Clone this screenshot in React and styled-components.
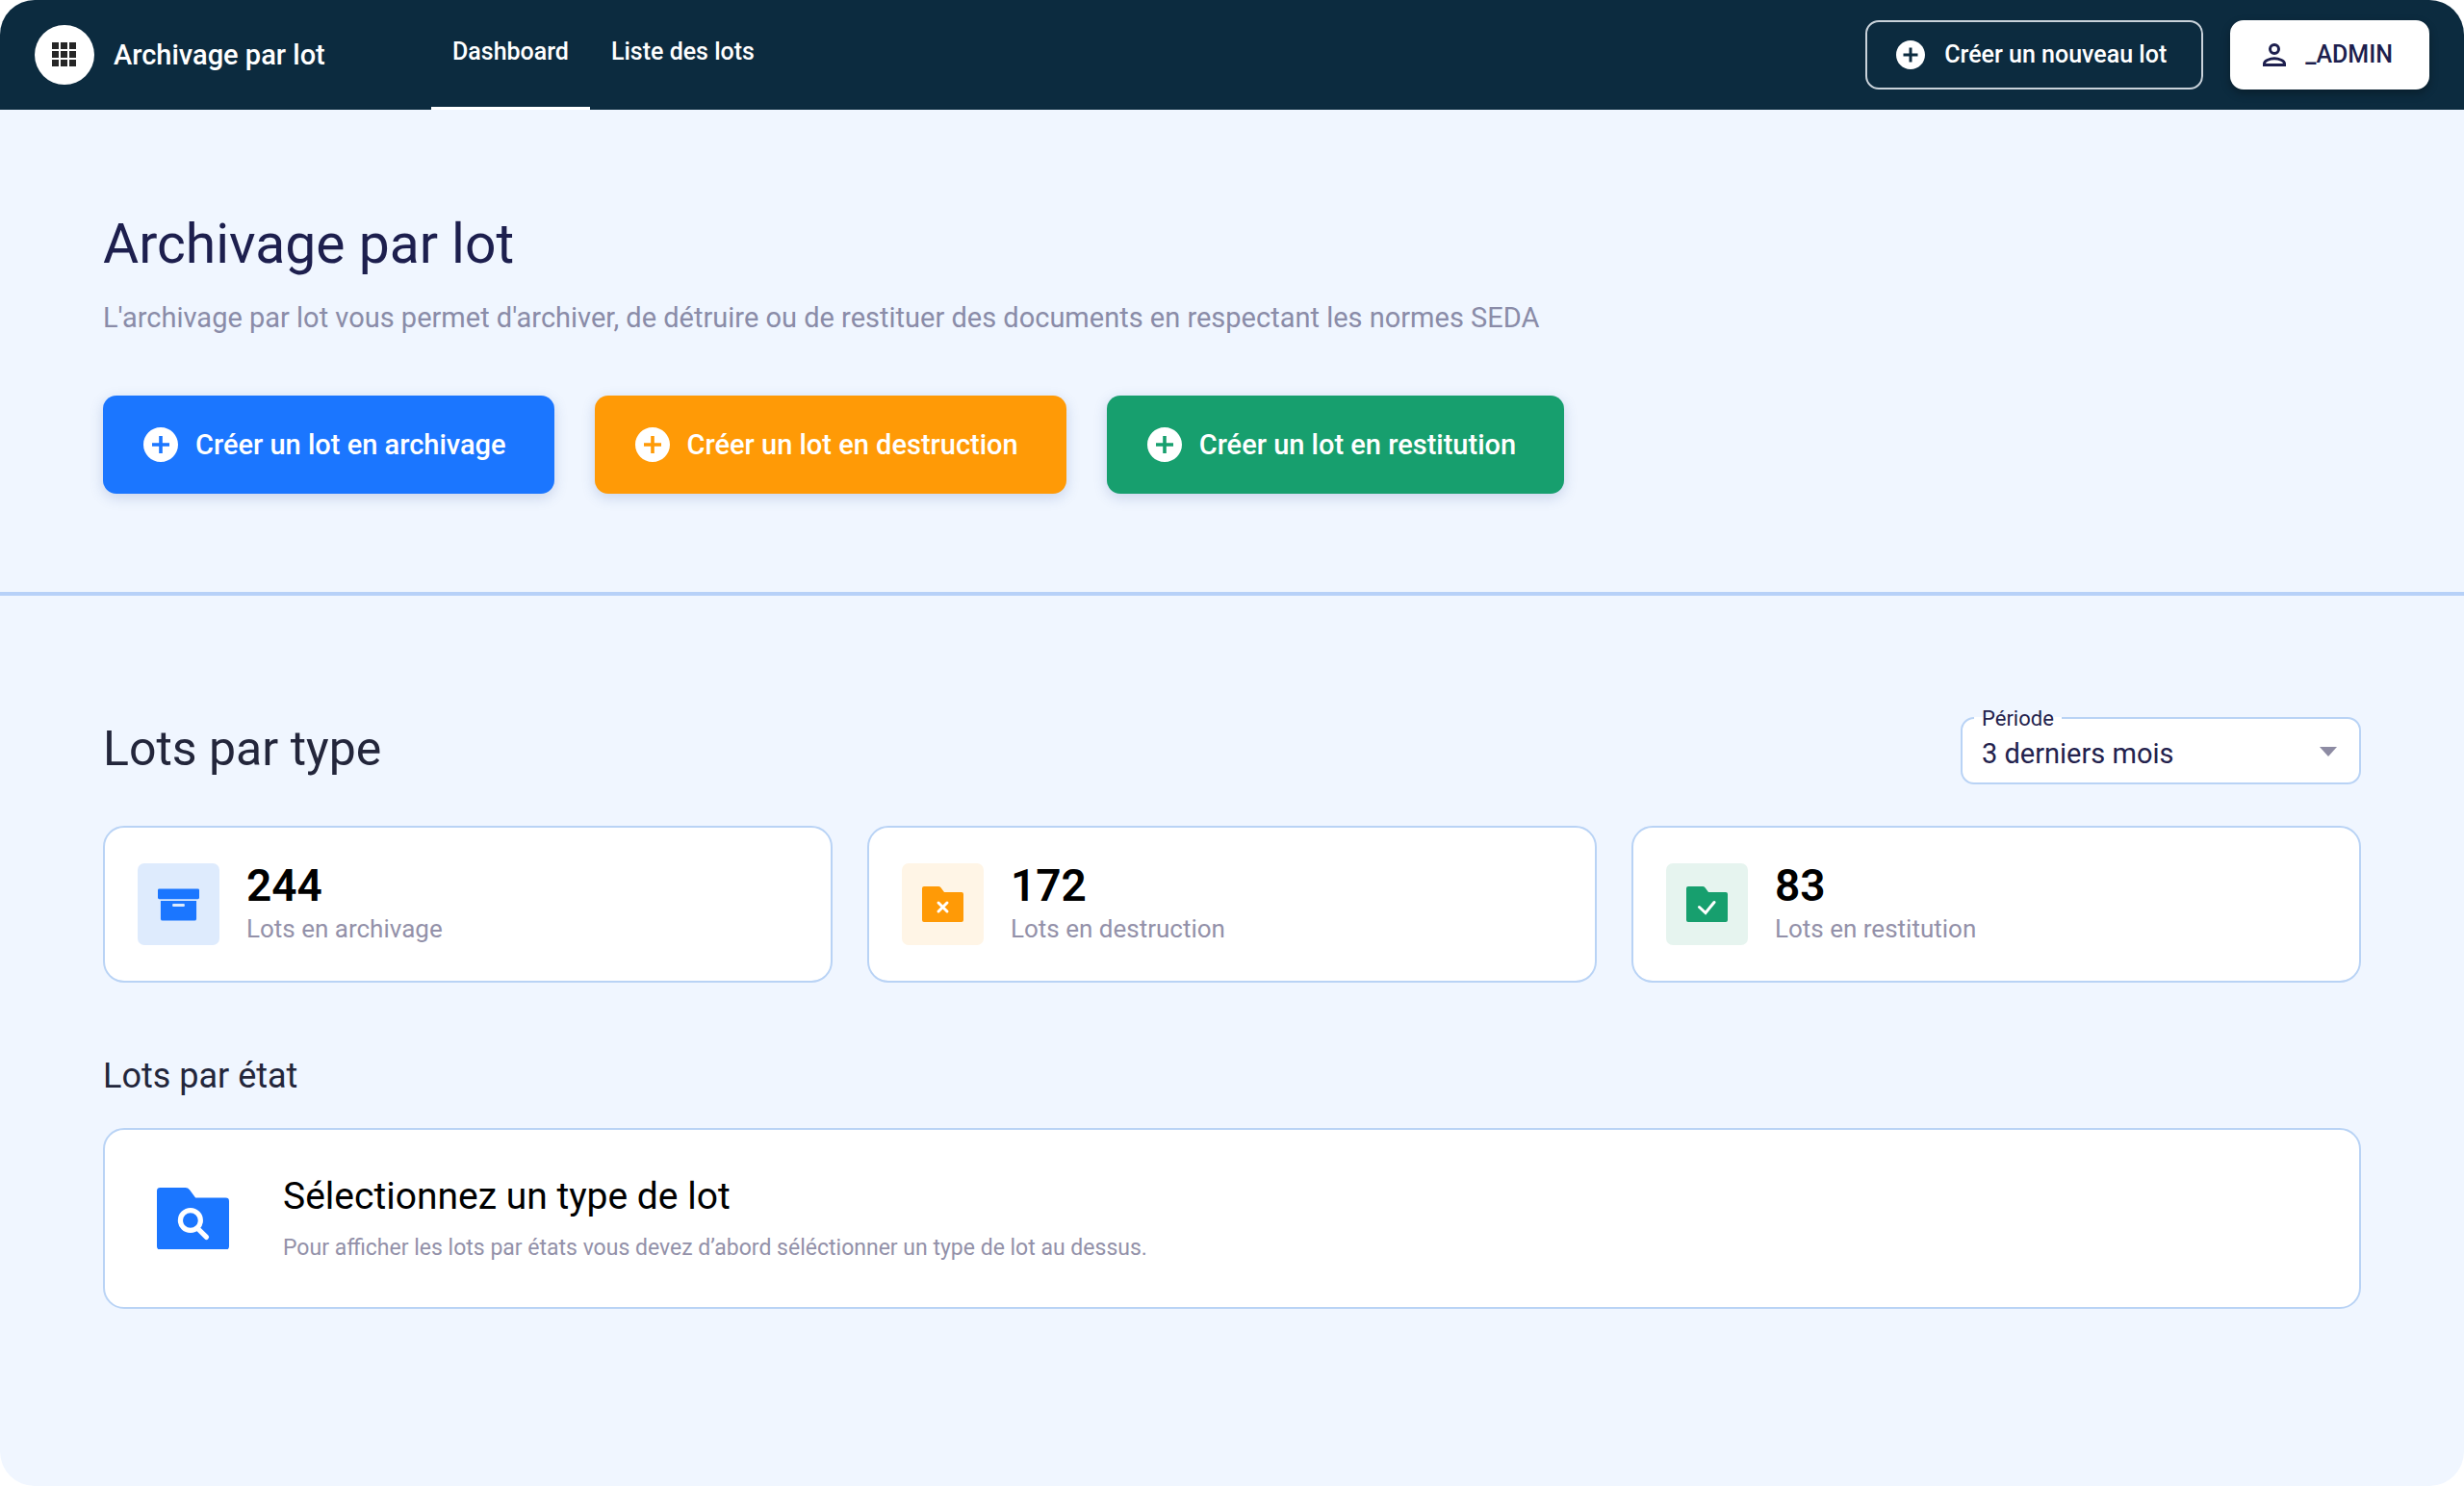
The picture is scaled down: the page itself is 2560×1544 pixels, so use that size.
import React, { useState } from 'react';
import styled, { createGlobalStyle } from 'styled-components';

const GlobalStyle = createGlobalStyle`
  *, *::before, *::after {
    box-sizing: border-box;
  }
  body {
    margin: 0;
    background: #ffffff;
    font-family: Roboto, "Liberation Sans", sans-serif;
    color: #1d1f4e;
  }
  h1, h2, h3, p {
    margin: 0;
    font-weight: 400;
  }
  button, select {
    font-family: inherit;
  }
  svg {
    display: block;
    flex-shrink: 0;
  }
`;

const Page = styled.div`
  min-height: 100vh;
  display: flex;
  flex-direction: column;
  background: #f0f6ff;
  border-radius: 36px;
  overflow: hidden;
`;

const Header = styled.header`
  height: 114px;
  display: flex;
  align-items: center;
  padding: 0 36px;
  background: #0c2b3f;
  color: #ffffff;
`;

const Brand = styled.a`
  width: 412px;
  display: flex;
  align-items: center;
  gap: 20px;
  color: inherit;
  font-size: 29px;
  font-weight: 500;
  line-height: 36px;
  text-decoration: none;
`;

const BrandIcon = styled.span`
  width: 62px;
  height: 62px;
  display: flex;
  align-items: center;
  justify-content: center;
  border-radius: 50%;
  background: #ffffff;
`;

const Nav = styled.nav`
  flex: 1;
  align-self: stretch;
  display: flex;
`;

const NavLink = styled.a`
  display: flex;
  align-items: center;
  padding: 0 22px 4px;
  border-bottom: 3px solid ${({ $active }) => ($active ? '#ffffff' : 'transparent')};
  color: inherit;
  font-size: 25px;
  font-weight: 500;
  line-height: 32px;
  text-decoration: none;
`;

const HeaderActions = styled.div`
  display: flex;
  gap: 28px;
`;

const HeaderButton = styled.button`
  height: 72px;
  display: flex;
  align-items: center;
  gap: 20px;
  padding: ${({ $filled }) => ($filled ? '0 36px 0 32px' : '0 36px 0 30px')};
  border: 2px solid ${({ $filled }) => ($filled ? '#ffffff' : '#c9d2da')};
  border-radius: 14px;
  background: ${({ $filled }) => ($filled ? '#ffffff' : 'transparent')};
  box-shadow: ${({ $filled }) => ($filled ? '0 4px 10px rgba(0, 0, 0, 0.3)' : 'none')};
  color: ${({ $filled }) => ($filled ? '#1d1f4e' : '#ffffff')};
  font-size: 25px;
  font-weight: 500;
  line-height: 32px;
  cursor: pointer;
`;

const Intro = styled.section`
  padding: 106px 107px 102px;
  border-bottom: 4px solid #b7d1f8;
`;

const Title = styled.h1`
  font-size: 57px;
  line-height: 68px;
  color: #1d1f4e;
`;

const Subtitle = styled.p`
  margin-top: 24px;
  font-size: 29px;
  line-height: 36px;
  color: #8a8ca8;
`;

const ButtonRow = styled.div`
  display: flex;
  flex-wrap: wrap;
  gap: 42px;
  margin-top: 63px;
`;

const tones = {
  archive: { main: '#1b76ff', soft: '#deebfd' },
  destroy: { main: '#ff9a06', soft: '#fff5e6' },
  restore: { main: '#179f6e', soft: '#e6f4ef' },
};

const CreateButton = styled.button`
  height: 102px;
  display: flex;
  align-items: center;
  gap: 18px;
  padding: 0 50px 0 42px;
  border: 0;
  border-radius: 14px;
  background: ${({ $tone }) => tones[$tone].main};
  box-shadow: 0 4px 14px rgba(60, 90, 160, 0.22);
  color: #ffffff;
  font-size: 29px;
  font-weight: 500;
  line-height: 36px;
  cursor: pointer;
`;

const Main = styled.main`
  padding: 126px 107px 106px;
`;

const SectionHead = styled.div`
  display: flex;
  justify-content: space-between;
  align-items: flex-start;
`;

const SectionTitle = styled.h2`
  font-size: 50px;
  line-height: 66px;
  color: #23263b;
`;

const SelectField = styled.div`
  position: relative;
  width: 416px;

  svg {
    position: absolute;
    right: 25px;
    top: 31px;
    pointer-events: none;
  }
`;

const SelectLabel = styled.label`
  position: absolute;
  left: 14px;
  top: -11px;
  padding: 0 8px;
  background: linear-gradient(#f0f6ff 11px, #ffffff 11px);
  font-size: 22px;
  line-height: 26px;
  color: #23224d;
`;

const Select = styled.select`
  width: 100%;
  height: 70px;
  padding: 6px 60px 0 20px;
  appearance: none;
  border: 2px solid #b9d3f5;
  border-radius: 14px;
  background: #ffffff;
  font-size: 29px;
  line-height: 36px;
  color: #23224d;
`;

const CardGrid = styled.div`
  display: grid;
  grid-template-columns: repeat(3, 1fr);
  gap: 36px;
  margin-top: 43px;
`;

const Card = styled.article`
  display: flex;
  align-items: center;
  border: 2px solid #b9d3f5;
  border-radius: 22px;
  background: #ffffff;
`;

const StatCard = styled(Card)`
  gap: 28px;
  padding: 36px 34px;
`;

const IconTile = styled.div`
  width: 85px;
  height: 85px;
  display: flex;
  align-items: center;
  justify-content: center;
  border-radius: 7px;
  background: ${({ $tone }) => tones[$tone].soft};
  color: ${({ $tone }) => tones[$tone].main};
`;

const StatValue = styled.p`
  font-size: 46px;
  font-weight: 600;
  line-height: 48px;
  color: #000000;
`;

const StatLabel = styled.p`
  margin-top: 3px;
  font-size: 26px;
  line-height: 36px;
  color: #9391a9;
`;

const StateTitle = styled.h2`
  margin-top: 75px;
  font-size: 36px;
  line-height: 44px;
  color: #23263b;
`;

const StateCard = styled(Card)`
  gap: 56px;
  margin-top: 32px;
  padding: 44px 54px;
  color: #1b76ff;
`;

const StateHeading = styled.h3`
  font-size: 39px;
  line-height: 50px;
  color: #000000;
`;

const StateText = styled.p`
  margin-top: 12px;
  font-size: 23px;
  line-height: 34px;
  color: #9391a9;
`;

function AppsIcon() {
  return (
    <svg width="26" height="26" viewBox="0 0 26 26" fill="#262626" aria-hidden="true">
      {[0, 9, 18].map((y) => [0, 9, 18].map((x) => <rect key={`${x}-${y}`} x={x} y={y} width="7" height="7" />))}
    </svg>
  );
}

function PlusIcon({ size }) {
  return (
    <svg width={size} height={size} viewBox="2 2 20 20" fill="currentColor" aria-hidden="true">
      <path d="M12 2C6.48 2 2 6.48 2 12s4.48 10 10 10 10-4.48 10-10S17.52 2 12 2zm5 11h-4v4h-2v-4H7v-2h4V7h2v4h4v2z" />
    </svg>
  );
}

function UserIcon() {
  return (
    <svg width="24" height="24" viewBox="4 4 16 16" fill="none" stroke="currentColor" strokeWidth="2" aria-hidden="true">
      <circle cx="12" cy="8" r="3" />
      <path d="M5 19v-1c0-2 4-3.5 7-3.5s7 1.5 7 3.5v1z" />
    </svg>
  );
}

function ArchiveIcon() {
  return (
    <svg width="43" height="34" viewBox="0 0 44 34" fill="currentColor" aria-hidden="true">
      <rect width="44" height="11" rx="1.5" />
      <path fillRule="evenodd" d="M3 13h38v19a2 2 0 0 1-2 2H5a2 2 0 0 1-2-2zM16.5 16a1 1 0 0 0-1 1v1a1 1 0 0 0 1 1h11a1 1 0 0 0 1-1v-1a1 1 0 0 0-1-1z" />
    </svg>
  );
}

function FolderIcon({ width = 43, children }) {
  return (
    <svg width={width} viewBox="0 0 43 37" fill="currentColor" aria-hidden="true">
      <path d="M2 0h15q1.500 0 2.500 1.300L23 6h18q2 0 2 2v27q0 2-2 2H2q-2 0-2-2V2q0-2 2-2z" />
      <g fill="none" stroke="#ffffff" strokeLinecap="round">
        {children}
      </g>
    </svg>
  );
}

function CaretIcon() {
  return (
    <svg width="18" height="10" viewBox="0 0 18 10" fill="#8d8ba3" aria-hidden="true">
      <path d="M0 0h18L9 10z" />
    </svg>
  );
}

const createButtons = [
  { tone: 'archive', label: 'Créer un lot en archivage' },
  { tone: 'destroy', label: 'Créer un lot en destruction' },
  { tone: 'restore', label: 'Créer un lot en restitution' },
];

const stats = [
  { tone: 'archive', value: 244, label: 'Lots en archivage', icon: <ArchiveIcon /> },
  {
    tone: 'destroy',
    value: 172,
    label: 'Lots en destruction',
    icon: (
      <FolderIcon>
        <path d="M17 17l9 9M26 17l-9 9" strokeWidth="3" />
      </FolderIcon>
    ),
  },
  {
    tone: 'restore',
    value: 83,
    label: 'Lots en restitution',
    icon: (
      <FolderIcon>
        <path d="M13.5 21.5l6.5 6 9-11" strokeWidth="3" />
      </FolderIcon>
    ),
  },
];

function App() {
  const [period, setPeriod] = useState('3');

  return (
    <Page>
      <GlobalStyle />
      <Header>
        <Brand href="#accueil">
          <BrandIcon>
            <AppsIcon />
          </BrandIcon>
          Archivage par lot
        </Brand>
        <Nav aria-label="Navigation principale">
          <NavLink href="#dashboard" $active aria-current="page">Dashboard</NavLink>
          <NavLink href="#lots">Liste des lots</NavLink>
        </Nav>
        <HeaderActions>
          <HeaderButton type="button">
            <PlusIcon size={30} />
            Créer un nouveau lot
          </HeaderButton>
          <HeaderButton type="button" $filled>
            <UserIcon />
            _ADMIN
          </HeaderButton>
        </HeaderActions>
      </Header>

      <Intro>
        <Title>Archivage par lot</Title>
        <Subtitle>
          L'archivage par lot vous permet d'archiver, de détruire ou de restituer des documents en respectant les normes SEDA
        </Subtitle>
        <ButtonRow>
          {createButtons.map(({ tone, label }) => (
            <CreateButton key={tone} type="button" $tone={tone}>
              <PlusIcon size={36} />
              {label}
            </CreateButton>
          ))}
        </ButtonRow>
      </Intro>

      <Main>
        <SectionHead>
          <SectionTitle>Lots par type</SectionTitle>
          <SelectField>
            <Select id="periode" value={period} onChange={(e) => setPeriod(e.target.value)}>
              <option value="3">3 derniers mois</option>
              <option value="6">6 derniers mois</option>
              <option value="12">12 derniers mois</option>
            </Select>
            <SelectLabel htmlFor="periode">Période</SelectLabel>
            <CaretIcon />
          </SelectField>
        </SectionHead>
        <CardGrid>
          {stats.map(({ tone, value, label, icon }) => (
            <StatCard key={tone}>
              <IconTile $tone={tone}>{icon}</IconTile>
              <div>
                <StatValue>{value}</StatValue>
                <StatLabel>{label}</StatLabel>
              </div>
            </StatCard>
          ))}
        </CardGrid>

        <StateTitle>Lots par état</StateTitle>
        <StateCard>
          <FolderIcon width={75}>
            <circle cx="20" cy="19.5" r="6" strokeWidth="3" />
            <path d="M24.5 24.5l5 5" strokeWidth="3" />
          </FolderIcon>
          <div>
            <StateHeading>Sélectionnez un type de lot</StateHeading>
            <StateText>Pour afficher les lots par états vous devez d’abord séléctionner un type de lot au dessus.</StateText>
          </div>
        </StateCard>
      </Main>
    </Page>
  );
}

export default App;
